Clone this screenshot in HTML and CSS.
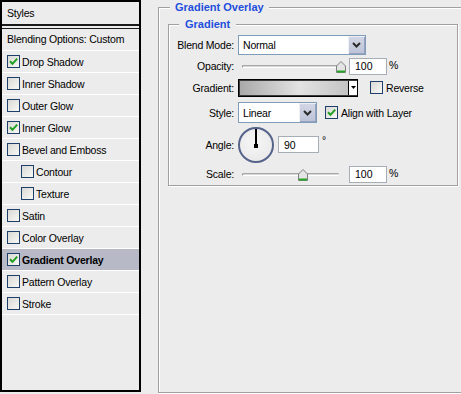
FILE: index.html
```html
<!DOCTYPE html>
<html>
<head>
<meta charset="utf-8">
<link rel="stylesheet" href="styles.css">
</head>
<body>
<div class="styles-panel">
  <div class="panel-header">Styles</div>
  <div class="blending">Blending Options: Custom</div>
  <div class="item"><span class="cb"><svg viewBox="0 0 11 11" width="11" height="11"><path d="M2 5.2 L4.5 7.8 L9.2 2.6" fill="none" stroke="#22a022" stroke-width="2"/></svg></span>Drop Shadow</div>
  <div class="item"><span class="cb"></span>Inner Shadow</div>
  <div class="item"><span class="cb"></span>Outer Glow</div>
  <div class="item"><span class="cb"><svg viewBox="0 0 11 11" width="11" height="11"><path d="M2 5.2 L4.5 7.8 L9.2 2.6" fill="none" stroke="#22a022" stroke-width="2"/></svg></span>Inner Glow</div>
  <div class="item"><span class="cb"></span>Bevel and Emboss</div>
  <div class="item sub"><span class="cb"></span>Contour</div>
  <div class="item sub"><span class="cb"></span>Texture</div>
  <div class="item"><span class="cb"></span>Satin</div>
  <div class="item"><span class="cb"></span>Color Overlay</div>
  <div class="item selected"><span class="cb"><svg viewBox="0 0 11 11" width="11" height="11"><path d="M2 5.2 L4.5 7.8 L9.2 2.6" fill="none" stroke="#22a022" stroke-width="2"/></svg></span>Gradient Overlay</div>
  <div class="item"><span class="cb"></span>Pattern Overlay</div>
  <div class="item"><span class="cb"></span>Stroke</div>
</div>

<fieldset class="group outer">
  <legend>Gradient Overlay</legend>
  <fieldset class="group inner">
    <legend>Gradient</legend>

    <div class="frow r-blend">
      <label class="lbl">Blend Mode:</label>
      <div class="select sel-blend"><span class="sel-text">Normal</span><span class="sel-btn"><svg viewBox="0 0 9 6" width="9" height="6"><path d="M1 1 L4.5 4.5 L8 1" fill="none" stroke="#2a2a2a" stroke-width="2"/></svg></span></div>
    </div>

    <div class="frow r-opacity">
      <label class="lbl">Opacity:</label>
      <div class="slider"><div class="track"></div><svg class="thumb" style="left:98px" viewBox="0 0 10 12" width="10" height="12"><path d="M0.5 5 L5 0.5 L9.5 5 V11.5 H0.5 Z" fill="#e4e4e4" stroke="#808080"/><rect x="1" y="9.5" width="8" height="2" fill="#27a527"/></svg></div>
      <input class="num" value="100"><span class="unit">%</span>
    </div>

    <div class="frow r-gradient">
      <label class="lbl">Gradient:</label>
      <div class="swatch"><span class="grad"></span><span class="grad-arrow"><svg viewBox="0 0 5 3" width="5" height="3"><path d="M0 0 H5 L2.5 3 Z" fill="#000"/></svg></span></div>
      <span class="cb cb-reverse"></span><span class="cb-label">Reverse</span>
    </div>

    <div class="frow r-style">
      <label class="lbl">Style:</label>
      <div class="select sel-style"><span class="sel-text">Linear</span><span class="sel-btn"><svg viewBox="0 0 9 6" width="9" height="6"><path d="M1 1 L4.5 4.5 L8 1" fill="none" stroke="#2a2a2a" stroke-width="2"/></svg></span></div>
      <span class="cb cb-align"><svg viewBox="0 0 11 11" width="11" height="11"><path d="M2 5.2 L4.5 7.8 L9.2 2.6" fill="none" stroke="#22a022" stroke-width="2"/></svg></span><span class="cb-label">Align with Layer</span>
    </div>

    <div class="frow r-angle">
      <label class="lbl">Angle:</label>
      <div class="dial"><span class="dial-hand"></span><span class="dial-dot"></span></div>
      <input class="num num-angle" value="90"><span class="deg">°</span>
    </div>

    <div class="frow r-scale">
      <label class="lbl">Scale:</label>
      <div class="slider"><div class="track track-scale"></div><svg class="thumb" style="left:60px" viewBox="0 0 10 12" width="10" height="12"><path d="M0.5 5 L5 0.5 L9.5 5 V11.5 H0.5 Z" fill="#e4e4e4" stroke="#808080"/><rect x="1" y="9.5" width="8" height="2" fill="#27a527"/></svg></div>
      <input class="num" value="100"><span class="unit">%</span>
    </div>
  </fieldset>
</fieldset>
</body>
</html>
```

FILE: styles.css
```css
html, body {
  margin: 0;
  padding: 0;
  overflow: hidden;
}
body {
  width: 461px;
  height: 394px;
  background: #ececec;
  display: flex;
  align-items: flex-start;
  font-family: "Liberation Sans", Tahoma, sans-serif;
  font-size: 10.5px;
  letter-spacing: -0.2px;
  color: #000;
}

/* ---------- left styles list ---------- */
.styles-panel {
  box-sizing: border-box;
  width: 141px;
  height: 392px;
  flex-shrink: 0;
  border: 2px solid #000;
  display: flex;
  flex-direction: column;
  background: #ececec;
}
.panel-header {
  height: 22px;
  line-height: 22px;
  padding-left: 5px;
  border-bottom: 2px solid #1a1a1a;
}
.blending {
  margin-top: 2px;
  border-top: 1px solid #1a1a1a;
  height: 21px;
  line-height: 21px;
  padding-left: 5px;
  border-bottom: 1px solid #fff;
}
.item {
  height: 21px;
  border-bottom: 1px solid #fff;
  display: flex;
  align-items: center;
  padding-left: 5px;
}
.item.sub {
  padding-left: 19px;
}
.item.selected {
  background: #b7b9c6;
  font-weight: bold;
}
.cb {
  box-sizing: border-box;
  width: 13px;
  height: 13px;
  border: 1px solid #1d3f6a;
  background: linear-gradient(135deg, #d8d8d4, #f8f8f6);
  display: inline-flex;
  flex-shrink: 0;
  margin-right: 2px;
}
.cb svg {
  display: block;
}

/* ---------- group boxes ---------- */
.group {
  margin: 0;
  padding: 0;
  min-width: 0;
  border: 1px solid #a0a0a0;
  box-shadow: inset 1px 1px 0 #fff, 1px 1px 0 #fff;
}
.group legend {
  font-weight: bold;
  font-size: 11px;
  letter-spacing: 0;
  color: #1f4fdc;
  line-height: 14px;
  background: #ececec;
}
.outer {
  box-sizing: border-box;
  margin-left: 17px;
  width: 303px;
  height: 393px;
  flex-shrink: 0;
  border-right: none;
}
.outer > legend {
  margin-left: 11px;
  padding: 0 5px;
}
.inner {
  box-sizing: border-box;
  width: 290px;
  margin: 3px 0 0 9px;
  padding: 0 0 2px 0;
}
.inner > legend {
  margin-left: 10px;
  padding: 0 6px;
}

/* ---------- form rows ---------- */
.frow {
  display: flex;
  align-items: center;
}
.lbl {
  width: 65px;
  flex-shrink: 0;
  text-align: right;
  margin-right: 4px;
}
.r-blend { margin-top: 4px; height: 20px; }
.r-opacity { margin-top: 2px; height: 18px; }
.r-gradient { margin-top: 3px; height: 19px; }
.r-style { margin-top: 5px; height: 21px; }
.r-angle { margin-top: 3px; height: 37px; }
.r-scale { margin-top: 2px; height: 18px; }

.select {
  box-sizing: border-box;
  height: 20px;
  border: 1px solid #7f9db9;
  background: #fff;
  display: flex;
  align-items: center;
}
.sel-blend { width: 128px; }
.sel-style { width: 79px; height: 21px; }
.sel-text {
  flex: 1;
  padding-left: 4px;
}
.sel-btn {
  box-sizing: border-box;
  width: 17px;
  align-self: stretch;
  background: linear-gradient(#d3d7e6, #bcc2d7);
  box-shadow: inset 1px 1px 0 #eef0f6, inset -1px -1px 0 #98a1bd;
  display: flex;
  align-items: center;
  justify-content: center;
}
.sel-btn svg { display: block; }

.slider {
  position: relative;
  width: 111px;
  height: 18px;
  flex-shrink: 0;
  display: flex;
  align-items: center;
}
.track {
  box-sizing: border-box;
  margin-left: 4px;
  width: 100px;
  height: 3px;
  border-top: 1px solid #a8a8a8;
  border-bottom: 1px solid #fff;
  border-left: 1px solid #909090;
  background: #d6d6d6;
  border-radius: 1px;
}
.track-scale { width: 97px; }
.thumb {
  position: absolute;
  top: 4px;
  display: block;
}

.num {
  box-sizing: border-box;
  width: 38px;
  height: 17px;
  border: 1px solid #a6adb6;
  background: #fff;
  font: inherit;
  letter-spacing: 0;
  color: #000;
  padding: 0 0 0 5px;
  margin: 0;
  outline: none;
}
.unit {
  margin-left: 2px;
  margin-top: -2px;
}

.swatch {
  box-sizing: border-box;
  width: 120px;
  height: 18px;
  border: 1px solid #000;
  box-shadow: inset 0 0 0 1px #3a3a3a;
  display: flex;
}
.grad {
  flex: 1;
  margin: 1px 0 1px 1px;
  background: linear-gradient(to right, #a9a9a9, #e2e2e2 55%, #c4c4c4);
}
.grad-arrow {
  width: 8px;
  border-left: 1px solid #000;
  margin: 1px 0;
  background: #fff;
  display: flex;
  align-items: center;
  justify-content: center;
}
.grad-arrow svg { display: block; }
.cb-reverse { margin-left: 12px; }
.cb-align { margin-left: 8px; }
.cb-label { margin-left: 1px; }

.dial {
  box-sizing: border-box;
  position: relative;
  width: 36px;
  height: 36px;
  border-radius: 50%;
  border: 2px solid #56638a;
  background: radial-gradient(circle at 45% 40%, #f6f6f6, #e6e6e6);
  flex-shrink: 0;
}
.dial-hand {
  position: absolute;
  left: 15px;
  top: 0;
  width: 2px;
  height: 16px;
  background: #000;
}
.dial-dot {
  position: absolute;
  left: 14px;
  top: 15px;
  width: 4px;
  height: 4px;
  background: #000;
}
.num-angle {
  width: 41px;
  margin-left: 4px;
}
.deg {
  align-self: flex-start;
  margin-top: 8px;
  margin-left: 3px;
}
```
